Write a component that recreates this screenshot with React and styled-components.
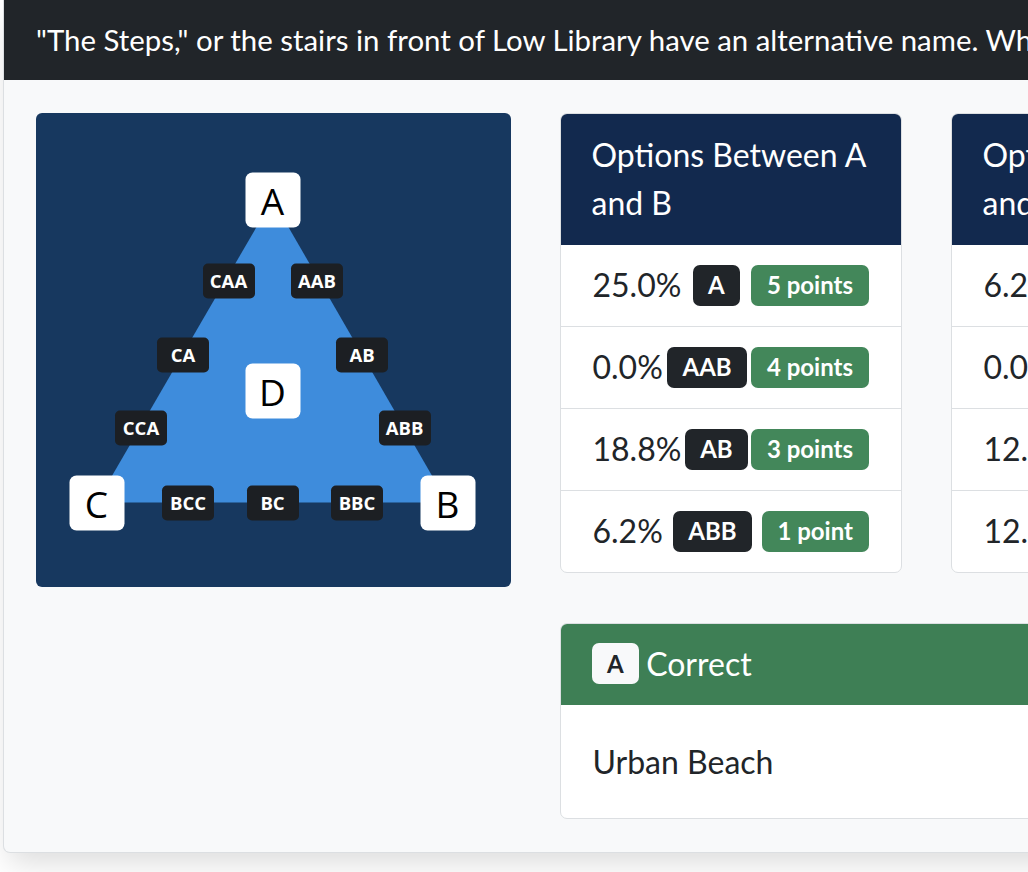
import React from "react";
import styled, { createGlobalStyle } from "styled-components";

const Global = createGlobalStyle`
  html, body { margin: 0; padding: 0; background: #ffffff; overflow: hidden; }
  body { font-family: Lato, "Open Sans", sans-serif; }
`;

const Page = styled.div`
  width: 1600px;
  padding-left: 3px;
  padding-bottom: 40px;
`;

const OuterCard = styled.div`
  border: 1px solid #dcdfe2;
  border-top: none;
  border-radius: 0 0 7px 7px;
  background: #f8f9fa;
  overflow: hidden;
  box-shadow: 0 16px 30px -6px rgba(0, 0, 0, 0.14);
`;

const Question = styled.div`
  background: #212529;
  color: #ffffff;
  font-size: 29.4px;
  line-height: 48px;
  padding: 16px 32px;
  white-space: nowrap;
`;

const Body = styled.div`
  display: flex;
  gap: 48.5px;
  padding: 33px 32px 33px;
  align-items: flex-start;
`;

const Diagram = styled.div`
  position: relative;
  flex: 0 0 475px;
  height: 474px;
  background: #17385f;
  border-radius: 6px;
  overflow: hidden;
`;

const TriangleSvg = styled.svg`
  display: block;
  width: 475px;
  height: 474px;
`;

const Vertex = styled.div`
  position: absolute;
  left: ${(p) => p.$x}px;
  top: ${(p) => p.$y}px;
  transform: translate(-50%, -50%);
  width: 55px;
  height: 55px;
  border-radius: 7px;
  background: #ffffff;
  color: #000000;
  font-family: "Open Sans", sans-serif;
  font-size: 37px;
  display: flex;
  align-items: center;
  justify-content: center;
  line-height: 1;
`;

const EdgeLabel = styled.div`
  position: absolute;
  left: ${(p) => p.$x}px;
  top: ${(p) => p.$y}px;
  transform: translate(-50%, -50%);
  width: 52px;
  height: 35px;
  border-radius: 5px;
  background: #1c1f23;
  color: #ffffff;
  font-family: "Open Sans", sans-serif;
  font-weight: 700;
  font-size: 18.5px;
  display: flex;
  align-items: center;
  justify-content: center;
  line-height: 1;
`;

const RightCol = styled.div`
  display: flex;
  flex-direction: column;
  gap: 50px;
`;

const TablesRow = styled.div`
  display: flex;
  gap: 49px;
`;

const OptionCard = styled.div`
  width: 342px;
  box-sizing: border-box;
  border: 1px solid #dcdfe2;
  border-radius: 7px;
  background: #ffffff;
  overflow: hidden;
`;

const CardHead = styled.div`
  background: ${(p) => p.$bg};
  color: #ffffff;
  font-size: 32px;
  line-height: 48px;
  padding: 17.5px 32px 18px;
  margin: -1px -1px 0;
`;

const Row = styled.div`
  display: flex;
  align-items: center;
  justify-content: space-between;
  padding: 16.5px 32px;
  border-top: ${(p) => (p.$first ? "none" : "1px solid #dcdfe2")};
  font-size: 32px;
  line-height: 48px;
  color: #212529;
`;

const Badge = styled.span`
  display: inline-block;
  font-size: 24px;
  font-weight: 700;
  line-height: 1;
  padding: 8.5px 15.5px;
  border-radius: 7px;
  background: ${(p) => p.$bg};
  color: ${(p) => p.$fg};
  white-space: nowrap;
`;

const AnswerCard = styled.div`
  border: 1px solid #dcdfe2;
  border-radius: 7px;
  background: #ffffff;
  overflow: hidden;
`;

const AnswerHead = styled(CardHead)`
  padding: 17px 32px 17.5px;
  display: flex;
  align-items: center;
  gap: 7px;
`;

const AnswerBody = styled.div`
  padding: 32.5px 32px;
  font-size: 32px;
  line-height: 48px;
  color: #212529;
`;

const vertices = [
  { t: "A", x: 236.5, y: 86.5 },
  { t: "D", x: 236.5, y: 278 },
  { t: "C", x: 60.5, y: 389.5 },
  { t: "B", x: 411.5, y: 389.5 },
];

const edges = [
  { t: "CAA", x: 192.5, y: 167.5 },
  { t: "AAB", x: 281, y: 167.5 },
  { t: "CA", x: 147, y: 242 },
  { t: "AB", x: 326, y: 242 },
  { t: "CCA", x: 105, y: 315 },
  { t: "ABB", x: 368.5, y: 315 },
  { t: "BCC", x: 152, y: 389.5 },
  { t: "BC", x: 236.5, y: 389.5 },
  { t: "BBC", x: 321, y: 389.5 },
];

const tables = [
  {
    title: "Options Between A and B",
    rows: [
      ["25.0%", "A", "5 points"],
      ["0.0%", "AAB", "4 points"],
      ["18.8%", "AB", "3 points"],
      ["6.2%", "ABB", "1 point"],
    ],
  },
  {
    title: "Options Between B and C",
    rows: [
      ["6.2%", "B", "5 points"],
      ["0.0%", "BBC", "4 points"],
      ["12.5%", "BC", "3 points"],
      ["12.5%", "BCC", "1 point"],
    ],
  },
  {
    title: "Options Between C and A",
    rows: [
      ["31.2%", "C", "5 points"],
      ["0.0%", "CCA", "4 points"],
      ["6.2%", "CA", "3 points"],
      ["0.0%", "CAA", "1 point"],
    ],
  },
];

export default function App() {
  return (
    <Page>
      <Global />
      <OuterCard>
        <Question>
          "The Steps," or the stairs in front of Low Library have an alternative name. Which of these is it?
        </Question>
        <Body>
          <Diagram>
            <TriangleSvg viewBox="0 0 475 474">
              <polygon points="236.5,86.5 411.5,389.5 60.5,389.5" fill="#3e8cdc" />
            </TriangleSvg>
            {edges.map((e) => (
              <EdgeLabel key={e.t} $x={e.x} $y={e.y}>
                {e.t}
              </EdgeLabel>
            ))}
            {vertices.map((v) => (
              <Vertex key={v.t} $x={v.x} $y={v.y}>
                {v.t}
              </Vertex>
            ))}
          </Diagram>
          <RightCol>
            <TablesRow>
              {tables.map((tb) => (
                <OptionCard key={tb.title}>
                  <CardHead $bg="#12294e">{tb.title}</CardHead>
                  {tb.rows.map((r, i) => (
                    <Row key={r[1]} $first={i === 0}>
                      <span>{r[0]}</span>
                      <Badge $bg="#212529" $fg="#ffffff">{r[1]}</Badge>
                      <Badge $bg="#43875a" $fg="#ffffff">{r[2]}</Badge>
                    </Row>
                  ))}
                </OptionCard>
              ))}
            </TablesRow>
            <AnswerCard>
              <AnswerHead $bg="#3e7f55">
                <Badge $bg="#f8f9fa" $fg="#212529">A</Badge>
                <span>Correct</span>
              </AnswerHead>
              <AnswerBody>Urban Beach</AnswerBody>
            </AnswerCard>
          </RightCol>
        </Body>
      </OuterCard>
    </Page>
  );
}
